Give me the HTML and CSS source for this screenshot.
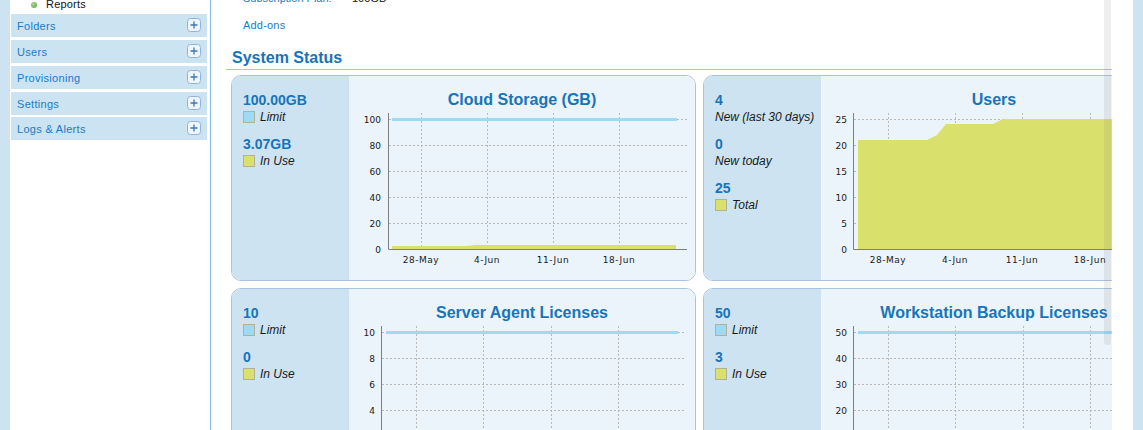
FILE: index.html
```html
<!DOCTYPE html>
<html>
<head>
<meta charset="utf-8">
<link rel="stylesheet" href="styles.css">
</head>
<body>
<div class="edge"></div>
<aside class="sidebar">
  <div class="sub"><span class="bullet"></span><span>Reports</span></div>
  <div class="menu-item"><span>Folders</span><svg class="plus" width="14" height="14" viewBox="0 0 14 14"><rect x="0.5" y="0.5" width="13" height="13" rx="3" fill="#eef5fb" stroke="#8fb3dc"/><path d="M7 3.5v7M3.5 7h7" stroke="#3f78b5" stroke-width="1.3"/></svg></div>
  <div class="menu-item"><span>Users</span><svg class="plus" width="14" height="14" viewBox="0 0 14 14"><rect x="0.5" y="0.5" width="13" height="13" rx="3" fill="#eef5fb" stroke="#8fb3dc"/><path d="M7 3.5v7M3.5 7h7" stroke="#3f78b5" stroke-width="1.3"/></svg></div>
  <div class="menu-item"><span>Provisioning</span><svg class="plus" width="14" height="14" viewBox="0 0 14 14"><rect x="0.5" y="0.5" width="13" height="13" rx="3" fill="#eef5fb" stroke="#8fb3dc"/><path d="M7 3.5v7M3.5 7h7" stroke="#3f78b5" stroke-width="1.3"/></svg></div>
  <div class="menu-item"><span>Settings</span><svg class="plus" width="14" height="14" viewBox="0 0 14 14"><rect x="0.5" y="0.5" width="13" height="13" rx="3" fill="#eef5fb" stroke="#8fb3dc"/><path d="M7 3.5v7M3.5 7h7" stroke="#3f78b5" stroke-width="1.3"/></svg></div>
  <div class="menu-item last"><span>Logs &amp; Alerts</span><svg class="plus" width="14" height="14" viewBox="0 0 14 14"><rect x="0.5" y="0.5" width="13" height="13" rx="3" fill="#eef5fb" stroke="#8fb3dc"/><path d="M7 3.5v7M3.5 7h7" stroke="#3f78b5" stroke-width="1.3"/></svg></div>
</aside>
<main class="main">
  <div class="content">
    <div class="info">
      <div class="info-row"><span class="info-label">Subscription Plan:</span><span class="info-value">100GB</span></div>
      <div class="info-row addons"><a class="link">Add-ons</a></div>
    </div>
    <section class="status">
      <h2 class="status-title">System Status</h2>
      <div class="cards">
        <!-- Cloud storage -->
        <div class="card">
          <div class="stats">
            <div class="stat"><div class="num">100.00GB</div><div class="legend"><span class="sw sw-limit"></span><span>Limit</span></div></div>
            <div class="stat"><div class="num">3.07GB</div><div class="legend"><span class="sw sw-use"></span><span>In Use</span></div></div>
          </div>
          <div class="chart">
            <h3 class="chart-title">Cloud Storage (GB)</h3>
            <svg class="plot" width="346" height="170" viewBox="0 0 346 170">
              <g class="grid">
                <path d="M40 9.5H338M40 35.5H338M40 61.5H338M40 87.5H338M40 113.5H338"/>
                <path d="M72.5 3V139M138.5 3V139M204.5 3V139M270.5 3V139"/>
              </g>
              <polygon class="area" points="43,139 43,136 118,136 126,135 327,135 327,139"/>
              <path class="limit" d="M43 9.5H328"/>
              <path class="axis" d="M39.5 3V139.5H338"/>
              <g class="yl">
                <text x="32" y="12.5">100</text><text x="32" y="38.5">80</text><text x="32" y="64.5">60</text><text x="32" y="90.5">40</text><text x="32" y="116.5">20</text><text x="32" y="142.5">0</text>
              </g>
              <g class="xl">
                <text x="72" y="153">28-May</text><text x="138" y="153">4-Jun</text><text x="204" y="153">11-Jun</text><text x="270" y="153">18-Jun</text>
              </g>
            </svg>
          </div>
        </div>
        <!-- Users -->
        <div class="card">
          <div class="stats">
            <div class="stat"><div class="num">4</div><div class="legend"><span>New (last 30 days)</span></div></div>
            <div class="stat"><div class="num">0</div><div class="legend"><span>New today</span></div></div>
            <div class="stat"><div class="num">25</div><div class="legend"><span class="sw sw-use"></span><span>Total</span></div></div>
          </div>
          <div class="chart">
            <h3 class="chart-title">Users</h3>
            <svg class="plot" width="346" height="170" viewBox="0 0 346 170">
              <g class="grid">
                <path d="M33 9.5H338M33 35.5H338M33 61.5H338M33 87.5H338M33 113.5H338"/>
                <path d="M67.5 3V139M134.5 3V139M201.5 3V139M269.5 3V139"/>
              </g>
              <polygon class="area" points="37,139 37,30 106,30 116,25 125,14 172,14 182,9 338,9 338,139"/>
              <path class="axis" d="M32.5 3V139.5H338"/>
              <g class="yl">
                <text x="26" y="12.5">25</text><text x="26" y="38.5">20</text><text x="26" y="64.5">15</text><text x="26" y="90.5">10</text><text x="26" y="116.5">5</text><text x="26" y="142.5">0</text>
              </g>
              <g class="xl">
                <text x="67" y="153">28-May</text><text x="134" y="153">4-Jun</text><text x="201" y="153">11-Jun</text><text x="269" y="153">18-Jun</text>
              </g>
            </svg>
          </div>
        </div>
        <!-- Server agent -->
        <div class="card">
          <div class="stats">
            <div class="stat"><div class="num">10</div><div class="legend"><span class="sw sw-limit"></span><span>Limit</span></div></div>
            <div class="stat"><div class="num">0</div><div class="legend"><span class="sw sw-use"></span><span>In Use</span></div></div>
          </div>
          <div class="chart">
            <h3 class="chart-title">Server Agent Licenses</h3>
            <svg class="plot" width="346" height="170" viewBox="0 0 346 170">
              <g class="grid">
                <path d="M33 9.5H337M33 35.5H337M33 61.5H337M33 87.5H337M33 113.5H337"/>
                <path d="M67.5 3V139M134.5 3V139M202.5 3V139M269.5 3V139"/>
              </g>
              <path class="limit" d="M37 9.5H329"/>
              <path class="axis" d="M32.5 3V139.5H337"/>
              <g class="yl">
                <text x="26" y="12.5">10</text><text x="26" y="38.5">8</text><text x="26" y="64.5">6</text><text x="26" y="90.5">4</text><text x="26" y="116.5">2</text><text x="26" y="142.5">0</text>
              </g>
              <g class="xl">
                <text x="67" y="153">28-May</text><text x="134" y="153">4-Jun</text><text x="202" y="153">11-Jun</text><text x="269" y="153">18-Jun</text>
              </g>
            </svg>
          </div>
        </div>
        <!-- Workstation -->
        <div class="card">
          <div class="stats">
            <div class="stat"><div class="num">50</div><div class="legend"><span class="sw sw-limit"></span><span>Limit</span></div></div>
            <div class="stat"><div class="num">3</div><div class="legend"><span class="sw sw-use"></span><span>In Use</span></div></div>
          </div>
          <div class="chart">
            <h3 class="chart-title">Workstation Backup Licenses</h3>
            <svg class="plot" width="346" height="170" viewBox="0 0 346 170">
              <g class="grid">
                <path d="M33 9.5H337M33 35.5H337M33 61.5H337M33 87.5H337M33 113.5H337"/>
                <path d="M67.5 3V139M134.5 3V139M202.5 3V139M269.5 3V139"/>
              </g>
              <polygon class="area" points="37,139 37,134 120,134 126,131 329,131 329,139"/>
              <path class="limit" d="M37 9.5H329"/>
              <path class="axis" d="M32.5 3V139.5H337"/>
              <g class="yl">
                <text x="26" y="12.5">50</text><text x="26" y="38.5">40</text><text x="26" y="64.5">30</text><text x="26" y="90.5">20</text><text x="26" y="116.5">10</text><text x="26" y="142.5">0</text>
              </g>
              <g class="xl">
                <text x="67" y="153">28-May</text><text x="134" y="153">4-Jun</text><text x="202" y="153">11-Jun</text><text x="269" y="153">18-Jun</text>
              </g>
            </svg>
          </div>
        </div>
      </div>
    </section>
  </div>
  <div class="scroll-thumb"></div>
</main>
<div class="edge"></div>
</body>
</html>
```
FILE: styles.css
```css
html, body {
  margin: 0;
  padding: 0;
}
body {
  font-family: "Liberation Sans", Arial, sans-serif;
  background: #fff;
  display: flex;
  height: 430px;
  overflow: hidden;
}
.edge {
  width: 10px;
  flex: none;
  background: #cde3f1;
}

/* Sidebar */
.sidebar {
  width: 196px;
  flex: none;
  padding: 0 3px 0 1px;
  border-right: 1px solid #8db9ea;
}
.sub {
  margin-top: -2px;
  height: 13px;
  line-height: 13px;
  padding-left: 20px;
  display: flex;
  align-items: center;
  gap: 9px;
  font-size: 11px;
  color: #111;
  letter-spacing: 0.2px;
}
.bullet {
  width: 6px;
  height: 6px;
  border-radius: 50%;
  background: radial-gradient(circle at 35% 35%, #a8d88c, #5e9e42);
}
.menu-item {
  height: 23px;
  margin-top: 3px;
  background: #cce3f1;
  display: flex;
  align-items: center;
  justify-content: space-between;
  padding: 0 6px;
  font-size: 11px;
  color: #1a7cc1;
  letter-spacing: 0.3px;
}
.menu-item.last {
  margin-top: 2px;
}
.plus {
  display: block;
  margin-top: -2px;
}

/* Main */
.main {
  flex: 1;
  min-width: 0;
  display: flex;
  position: relative;
  padding-right: 21px;
}
.content {
  flex: 1;
  min-width: 0;
  overflow: hidden;
}
.scroll-thumb {
  position: absolute;
  left: 893px;
  top: -4px;
  width: 7px;
  height: 349px;
  border-radius: 4px;
  background: rgba(120, 120, 120, 0.13);
}
.info {
  margin-top: -8px;
  padding-left: 32px;
  font-size: 11px;
  line-height: 13px;
}
.info-row {
  display: flex;
}
.info-label {
  width: 109px;
  color: #1a7cc1;
}
.info-value {
  color: #111;
}
.addons {
  margin-top: 14px;
}
.link {
  color: #1a7cc1;
  letter-spacing: 0.2px;
}
.status {
  margin-left: 15px;
  margin-top: 16px;
}
.status-title {
  margin: 0;
  padding: 0 0 1px 6px;
  font-size: 16px;
  line-height: 20px;
  font-weight: bold;
  color: #1874b9;
  border-bottom: 1px solid #a9c3e3;
}
.cards {
  display: grid;
  grid-template-columns: 465px 465px;
  column-gap: 7px;
  row-gap: 7px;
  padding: 5px 0 0 5px;
}
.card {
  height: 206px;
  box-sizing: border-box;
  border: 1px solid #a8c4e4;
  border-radius: 10px;
  overflow: hidden;
  display: flex;
}
.stats {
  width: 117px;
  flex: none;
  box-sizing: border-box;
  background: #cde3f1;
  padding: 16px 0 0 11px;
}
.stat {
  margin-bottom: 12px;
}
.num {
  font-size: 14px;
  line-height: 17px;
  font-weight: bold;
  color: #1874b9;
}
.legend {
  margin-top: 1px;
  display: flex;
  align-items: center;
  font-size: 12px;
  line-height: 14px;
  font-style: italic;
  color: #1a1a1a;
  white-space: nowrap;
}
.sw {
  width: 12px;
  height: 12px;
  box-sizing: border-box;
  border: 1px solid #b2b297;
  margin-right: 5px;
  flex: none;
}
.sw-limit { background: #9ddaf6; }
.sw-use { background: #d9e06b; }

.chart {
  flex: 1;
  background: #ebf4fa;
}
.chart-title {
  margin: 0;
  padding-top: 14px;
  font-size: 16px;
  line-height: 20px;
  font-weight: bold;
  color: #1874b9;
  text-align: center;
  white-space: nowrap;
}
.plot {
  display: block;
}
.grid path {
  fill: none;
  stroke: #b9b9b9;
  stroke-width: 1;
  stroke-dasharray: 2 2;
}
.axis {
  fill: none;
  stroke: #7f7f7f;
  stroke-width: 1;
}
.limit {
  fill: none;
  stroke: #9fd9f5;
  stroke-width: 3;
}
.area {
  fill: #d9e06b;
}
.plot text {
  font-family: "DejaVu Sans", sans-serif;
  font-size: 9px;
  fill: #1a1a1a;
}
.yl text {
  text-anchor: end;
}
.xl text {
  text-anchor: middle;
  letter-spacing: 0.5px;
}
```
